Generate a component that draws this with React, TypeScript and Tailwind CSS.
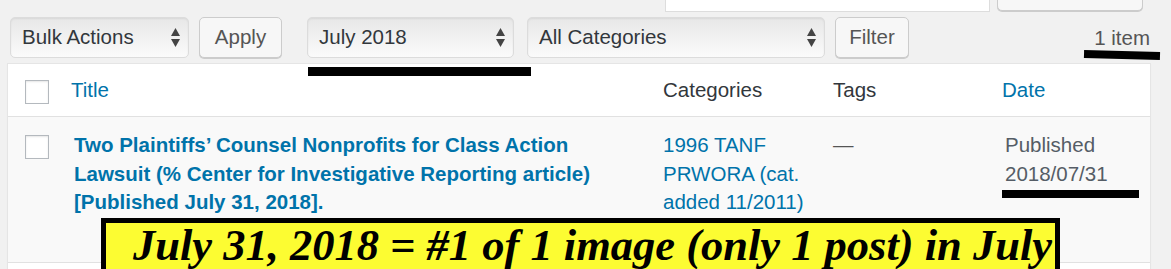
import React from 'react';

// up/down arrows on the native-looking selects
const Arrows = () => (
  <svg width="9" height="19" viewBox="0 0 9 19" className="shrink-0">
    <path d="M0 8 L4.5 0 L9 8 Z" fill="#444" />
    <path d="M0 11 L9 11 L4.5 19 Z" fill="#444" />
  </svg>
);

const Select: React.FC<{ label: string; className?: string }> = ({ label, className = '' }) => (
  <div
    className={`flex h-[41px] items-center justify-between rounded-[5px] border border-[#dcdcdc] bg-linear-to-b from-[#e7e7e7] to-[#fbfbfb] pl-[11px] pr-[8px] shadow-[inset_0_1px_2px_rgba(0,0,0,0.07)] ${className}`}
  >
    <span className="text-[#32373c]">{label}</span>
    <Arrows />
  </div>
);

const Button: React.FC<{ label: string; className?: string }> = ({ label, className = '' }) => (
  <div
    className={`flex h-[41px] items-center justify-center rounded-[5px] border border-[#cccccc] bg-[#f7f7f7] text-[#555555] shadow-[0_1px_0_#cccccc] ${className}`}
  >
    {label}
  </div>
);

const Checkbox: React.FC<{ className?: string }> = ({ className = '' }) => (
  <div className={`h-[24px] w-[24px] border border-[#b4b9be] bg-white shadow-[inset_0_1px_2px_rgba(0,0,0,0.1)] ${className}`} />
);

export default function App() {
  return (
    <div className="relative h-[269px] w-full overflow-hidden bg-[#f1f1f1] font-['Liberation_Sans',Arial,sans-serif] text-[20.5px] text-[#32373c]">
      {/* search box + button, cut off at the top */}
      <div className="flex h-[12px] items-end justify-end gap-[7px] overflow-hidden pr-[28px]">
        <div className="h-[30px] w-[325px] border border-[#dddddd] bg-white" />
        <div className="mb-[1px] h-[30px] w-[146px] rounded-b-[5px] border border-[#cccccc] bg-[#f7f7f7] shadow-[0_1px_0_#cccccc]" />
      </div>

      {/* Toolbar */}
      <div className="mt-[5px] flex h-[42px] items-start pl-[10px] pr-[21px]">
        <Select label="Bulk Actions" className="w-[179px]" />
        <Button label="Apply" className="ml-[10px] w-[83px]" />
        <Select label="July 2018" className="ml-[25px] w-[207px]" />
        <Select label="All Categories" className="ml-[13px] w-[298px]" />
        <Button label="Filter" className="ml-[10px] w-[74px]" />
        <span className="ml-auto self-center text-[#555555]">1 item</span>
      </div>

      {/* Table */}
      <div className="ml-[7px] mt-[4px] w-[1144px] border border-[#e5e5e5] bg-white shadow-[0_1px_1px_rgba(0,0,0,0.04)]">
        <div className="grid h-[53px] grid-cols-[63px_592px_170px_169px_1fr] items-center border-b border-[#e1e1e1]">
          <Checkbox className="ml-[17px] mt-[4px]" />
          <span className="pt-[1px] text-[#0073aa]">Title</span>
          <span className="pt-[1px]">Categories</span>
          <span className="pt-[1px]">Tags</span>
          <span className="pt-[1px] text-[#0073aa]">Date</span>
        </div>
        <div className="grid h-[146px] grid-cols-[63px_592px_170px_169px_1fr] items-start border-b border-[#e1e1e1] bg-[#f9f9f9] pt-[14px] leading-[28.5px]">
          <Checkbox className="ml-[17px] mt-[4px]" />
          <div className="whitespace-nowrap pl-[3px] font-bold text-[#0073aa]">
            Two Plaintiffs’ Counsel Nonprofits for Class Action
            <br />
            Lawsuit (% Center for Investigative Reporting article)
            <br />
            [Published July 31, 2018].
          </div>
          <div className="whitespace-nowrap text-[#0073aa]">
            1996 TANF
            <br />
            PRWORA (cat.
            <br />
            added 11/2011)
          </div>
          <div className="text-[#555555]">—</div>
          <div className="whitespace-nowrap pl-[3px] text-[#555d66]">
            Published
            <br />
            2018/07/31
          </div>
        </div>
        <div className="h-[20px] bg-white" />
      </div>

      {/* annotation marks drawn over the screenshot */}
      <div className="absolute left-[308px] top-[67px] h-[9px] w-[223px] bg-black" />
      <div className="absolute left-[1084px] top-[51px] h-[8px] w-[76px] rotate-[1.5deg] bg-black" />
      <div className="absolute left-[1002px] top-[190px] h-[8px] w-[137px] bg-black" />
      <div className="absolute left-[101px] top-[218px] h-[60px] w-[959px] border-[5px] border-black bg-[#fcfc32] pl-[27px] pt-[1px]">
        <p className="whitespace-nowrap font-['Liberation_Serif',Georgia,serif] text-[44.5px] font-bold italic leading-[43px] text-black">
          July 31, 2018 = #1 of 1 image (only 1 post) in July
        </p>
      </div>
    </div>
  );
}
